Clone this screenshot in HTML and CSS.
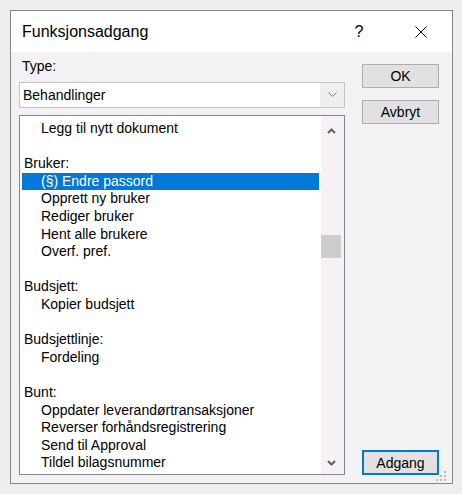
FILE: index.html
```html
<!DOCTYPE html>
<html lang="no">
<head>
    <meta charset="UTF-8">
    <title>Funksjonsadgang</title>
    <link rel="stylesheet" href="styles.css">
</head>
<body>
    <div class="dialog">
        <div class="titlebar">
            <span class="title">Funksjonsadgang</span>
            <span class="title-btn help">?</span>
            <span class="title-btn close">
                <svg width="12" height="12" viewBox="0 0 12 12"><path d="M0.5 0.5 L11.5 11.5 M11.5 0.5 L0.5 11.5" stroke="#000" stroke-width="1" fill="none"/></svg>
            </span>
        </div>
        <div class="content">
            <div class="left">
                <div class="type-label">Type:</div>
                <div class="select">
                    <span class="select-text">Behandlinger</span>
                    <span class="select-arrow">
                        <svg width="9" height="5" viewBox="0 0 9 5"><path d="M0.5 0.5 L4.5 4.5 L8.5 0.5" stroke="#7a7a7a" stroke-width="1" fill="none"/></svg>
                    </span>
                </div>
                <div class="listbox">
                    <div class="items">
                        <div class="row item">Legg til nytt dokument</div>
                        <div class="row"></div>
                        <div class="row">Bruker:</div>
                        <div class="row item selected">(§) Endre passord</div>
                        <div class="row item">Opprett ny bruker</div>
                        <div class="row item">Rediger bruker</div>
                        <div class="row item">Hent alle brukere</div>
                        <div class="row item">Overf. pref.</div>
                        <div class="row"></div>
                        <div class="row">Budsjett:</div>
                        <div class="row item">Kopier budsjett</div>
                        <div class="row"></div>
                        <div class="row">Budsjettlinje:</div>
                        <div class="row item">Fordeling</div>
                        <div class="row"></div>
                        <div class="row">Bunt:</div>
                        <div class="row item">Oppdater leverandørtransaksjoner</div>
                        <div class="row item">Reverser forhåndsregistrering</div>
                        <div class="row item">Send til Approval</div>
                        <div class="row item">Tildel bilagsnummer</div>
                    </div>
                    <div class="scrollbar">
                        <div class="sb-btn sb-up">
                            <svg width="9" height="6" viewBox="0 0 9 6"><path d="M1 5 L4.5 1.5 L8 5" stroke="#606060" stroke-width="2" fill="none"/></svg>
                        </div>
                        <div class="thumb"></div>
                        <div class="sb-space"></div>
                        <div class="sb-btn sb-down">
                            <svg width="9" height="6" viewBox="0 0 9 6"><path d="M1 1 L4.5 4.5 L8 1" stroke="#606060" stroke-width="2" fill="none"/></svg>
                        </div>
                    </div>
                </div>
            </div>
            <div class="right">
                <button class="btn">OK</button>
                <button class="btn">Avbryt</button>
                <button class="btn default-btn">Adgang</button>
            </div>
        </div>
        <svg class="grip" width="12" height="12" viewBox="0 0 12 12">
            <rect x="9" y="1" width="2" height="2" fill="#bcbcbc"/>
            <rect x="9" y="5" width="2" height="2" fill="#bcbcbc"/>
            <rect x="5" y="5" width="2" height="2" fill="#bcbcbc"/>
            <rect x="9" y="9" width="2" height="2" fill="#bcbcbc"/>
            <rect x="5" y="9" width="2" height="2" fill="#bcbcbc"/>
            <rect x="1" y="9" width="2" height="2" fill="#bcbcbc"/>
        </svg>
    </div>
</body>
</html>
```

FILE: styles.css
```css
* {
    margin: 0;
    padding: 0;
    box-sizing: border-box;
    font-family: 'Liberation Sans', Arial, sans-serif;
}

body {
    background-color: #efeeef;
    color: #000;
    font-size: 14px;
}

.dialog {
    position: relative;
    margin: 10px 0 0 10px;
    width: 443px;
    height: 474px;
    border: 1px solid #868686;
    background-color: #f4f1f5;
    display: flex;
    flex-direction: column;
}

/* Title bar */
.titlebar {
    height: 41px;
    background-color: #fff;
    display: flex;
    align-items: center;
    padding: 0 8px 0 11px;
}

.title {
    font-size: 16px;
}

.title-btn {
    width: 46px;
    height: 30px;
    display: flex;
    align-items: center;
    justify-content: center;
}

.help {
    margin-left: auto;
    margin-right: 16px;
    font-size: 16px;
}

/* Content */
.content {
    flex: 1;
    display: flex;
    padding: 0 0 8px 8px;
}

.left {
    width: 326px;
    display: flex;
    flex-direction: column;
}

.type-label {
    margin-top: 6px;
    line-height: 17.6px;
    padding-left: 3px;
}

.select {
    margin-top: 6px;
    height: 26px;
    border: 1px solid #c4c4c4;
    background-color: #fff;
    display: flex;
    align-items: stretch;
}

.select-text {
    flex: 1;
    padding-left: 3px;
    line-height: 25px;
}

.select-arrow {
    width: 24px;
    background-color: #efefef;
    display: flex;
    align-items: center;
    justify-content: center;
}

.listbox {
    margin-top: 7px;
    flex: 1;
    border: 1px solid #828790;
    background-color: #fff;
    display: flex;
}

.items {
    flex: 1;
    padding: 4.5px 2px 0 2px;
}

.row {
    height: 17.6px;
    line-height: 17.6px;
    padding-left: 2px;
    white-space: nowrap;
}

.row.item {
    padding-left: 19px;
}

.row.selected {
    background-color: #0078d7;
    color: #fff;
}

.scrollbar {
    width: 23px;
    background-color: #f5f1f5;
    display: flex;
    flex-direction: column;
}

.sb-btn {
    display: flex;
    align-items: center;
    justify-content: center;
    padding-right: 2px;
}

.sb-up {
    height: 31px;
}

.sb-down {
    height: 23px;
}

.thumb {
    margin-top: 88px;
    width: 20px;
    height: 23px;
    background-color: #cdcdcd;
}

.sb-space {
    flex: 1;
}

/* Buttons */
.right {
    margin-left: 17px;
    display: flex;
    flex-direction: column;
}

.btn {
    width: 77px;
    height: 24px;
    border: 1px solid #adadad;
    background-color: #e1e1e1;
    font-size: 14px;
    color: #000;
}

.btn:first-child {
    margin-top: 12px;
}

.btn + .btn {
    margin-top: 12px;
}

.default-btn {
    margin-top: auto !important;
    margin-bottom: 0;
    height: 25px;
    border: 2px solid #0078d7;
}

.grip {
    position: absolute;
    right: 5px;
    bottom: 1px;
}
```
